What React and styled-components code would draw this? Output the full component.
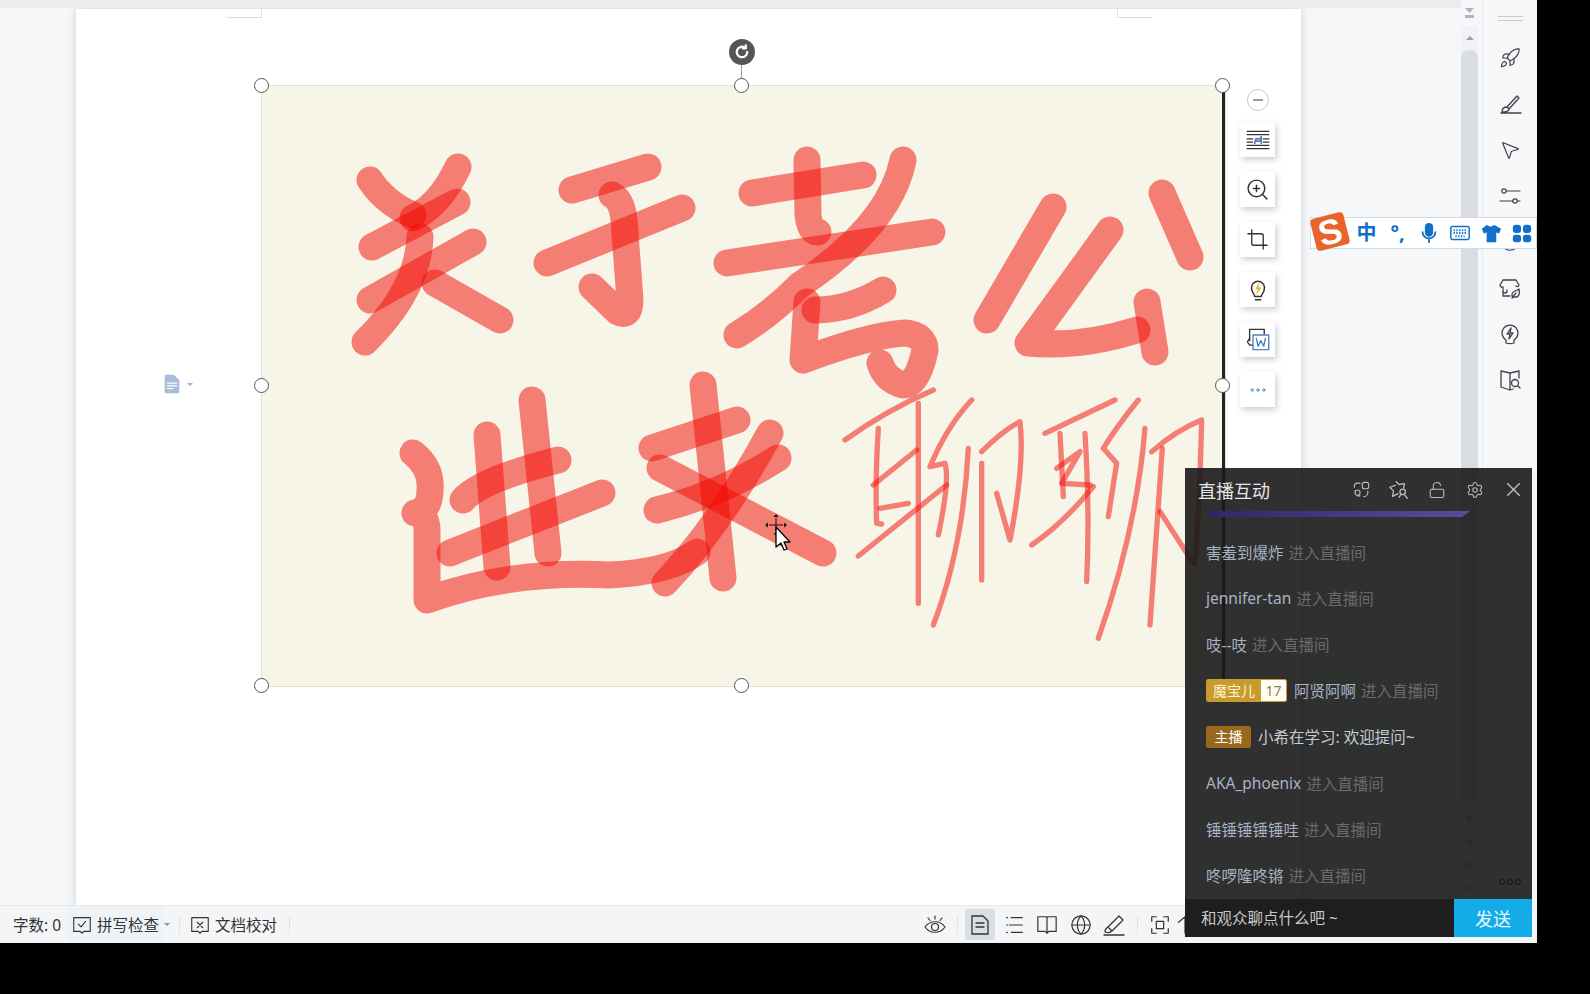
import React from "react";
import styled, { createGlobalStyle } from "styled-components";
import { Rocket, MousePointer2, Settings, X, LockOpen, Globe, ZoomIn, Crop } from "lucide-react";

const GlobalStyle = createGlobalStyle`
  html, body { margin: 0; padding: 0; background: #000; }
  body { font-family: "Noto Sans", "Noto Sans CJK SC", sans-serif; }
`;

const Root = styled.div`
  width: 1590px;
  height: 994px;
  background: #000;
  overflow: hidden;
`;

const Window = styled.div`
  position: relative;
  width: 1537px;
  height: 943px;
  display: flex;
  flex-direction: column;
  background: #f5f7f9;
  overflow: hidden;
`;

const Body = styled.div`
  flex: 1;
  min-height: 0;
  display: flex;
`;

const Canvas = styled.div`
  flex: 1;
  min-width: 0;
  border-top: 8px solid #eaecee;
  padding: 1px 0 0 76px;
  overflow: hidden;
  display: flex;
`;

const Page = styled.div`
  position: relative;
  width: 1225px;
  box-sizing: border-box;
  padding: 77px 0 0 186px;
  background: #fff;
  box-shadow: 0 0 8px rgba(120, 130, 140, 0.35);
`;

const CornerMark = styled.div`
  position: absolute;
  top: 0;
  left: ${(p) => p.$x}px;
  width: 34px;
  height: 8px;
  border-bottom: 1px solid #dcdcdc;
  ${(p) => (p.$flip ? "border-left" : "border-right")}: 1px solid #dcdcdc;
`;

const MarginTool = styled.div`
  position: absolute;
  left: 85px;
  top: 364px;
  display: flex;
  align-items: center;
  gap: 4px;
  color: #a8bbd8;
`;

const Caret = styled.span`
  width: 0;
  height: 0;
  border-left: 3px solid transparent;
  border-right: 3px solid transparent;
  border-top: 3px solid ${(p) => p.$color || "#8a9099"};
`;

const ImageFrame = styled.div`
  position: relative;
  width: 960px;
  height: 600px;
  background: #f7f5e8;
  outline: 1px solid #dfe3d2;
  border-right: 3px solid #222;
  box-sizing: content-box;
`;

const Ink = styled.svg`
  display: block;
  overflow: visible;
`;

const Handle = styled.div`
  position: absolute;
  left: ${(p) => p.$x}px;
  top: ${(p) => p.$y}px;
  width: 13px;
  height: 13px;
  margin: -8px 0 0 -8px;
  border: 1.5px solid #555;
  border-radius: 50%;
  background: #fff;
`;

const RotateLine = styled.div`
  position: absolute;
  left: 479px;
  top: -21px;
  width: 1px;
  height: 14px;
  background: #9a9a9a;
`;

const RotateHandle = styled.div`
  position: absolute;
  left: 467px;
  top: -47px;
  width: 26px;
  height: 26px;
  border-radius: 50%;
  background: #555;
  display: flex;
  align-items: center;
  justify-content: center;
`;

const FloatTools = styled.div`
  position: absolute;
  left: 978px;
  top: 3px;
  width: 35px;
  display: flex;
  flex-direction: column;
  align-items: center;
  gap: 15px;
`;

const MinusButton = styled.div`
  width: 20px;
  height: 20px;
  margin-bottom: -4px;
  border: 1.5px solid #c9c9c9;
  border-radius: 50%;
  background: #fff;
  display: flex;
  align-items: center;
  justify-content: center;

  &::before {
    content: "";
    width: 10px;
    height: 2.5px;
    background: #9b9b9b;
  }
`;

const ToolButton = styled.div`
  width: 35px;
  height: 35px;
  background: #fff;
  box-shadow: 2px 3px 6px rgba(90, 100, 110, 0.3);
  display: flex;
  align-items: center;
  justify-content: center;
  color: #333;
`;

const Scrollbar = styled.div`
  width: 17px;
  margin-right: 4px;
  background: #f0f2f5;
  display: flex;
  flex-direction: column;
  align-items: center;
`;

const ScrollHead = styled.div`
  width: 100%;
  height: 26px;
  background: #f5f7f9;
  display: flex;
  flex-direction: column;
  align-items: center;
  justify-content: center;
  gap: 2px;
`;

const ScrollTiny = styled.div`
  width: 9px;
  height: ${(p) => p.$h}px;
  background: #b0b5bb;
  clip-path: ${(p) => (p.$tri ? "polygon(0 0, 100% 0, 50% 100%)" : "none")};
`;

const ScrollUp = styled.div`
  height: 24px;
  display: flex;
  align-items: center;

  &::before {
    content: "";
    border-left: 4px solid transparent;
    border-right: 4px solid transparent;
    border-bottom: 4px solid #9aa0a7;
  }
`;

const ScrollThumb = styled.div`
  flex: 1;
  width: 100%;
  border-radius: 8px 8px 0 0;
  background: #d9dce1;
`;

const ScrollFoot = styled.div`
  height: 105px;
  width: 100%;
  box-sizing: border-box;
  padding-top: 16px;
  background: #f5f7f9;
  display: flex;
  flex-direction: column;
  align-items: center;
  gap: 17px;

  span {
    width: 7px;
    height: 6px;
    background: #555;
    opacity: 0.3;
  }
`;

const Sidebar = styled.div`
  width: 54px;
  border-left: 1px solid #e9ebee;
  display: flex;
  flex-direction: column;
  align-items: center;
  color: #3f4246;
`;

const DragLines = styled.div`
  width: 25px;
  height: 35px;
  box-sizing: border-box;
  padding-top: 16px;

  &::before,
  &::after {
    content: "";
    display: block;
    height: 1px;
    margin-bottom: 3px;
    background: #c6c9cd;
  }
`;

const SideItem = styled.div`
  width: 100%;
  height: 46px;
  display: flex;
  align-items: center;
  justify-content: center;
`;

const SideMore = styled.div`
  margin-top: auto;
  margin-bottom: 20px;
  display: flex;
  gap: 2px;

  span {
    width: 6px;
    height: 6px;
    box-sizing: border-box;
    border: 1.5px solid #000;
    border-radius: 50%;
  }
`;

const StatusBar = styled.div`
  height: 37px;
  flex: none;
  border-top: 1px solid #e6e8eb;
  background: #f3f5f7;
  display: flex;
  align-items: center;
  padding-left: 13px;
  color: #333;
  font-size: 15.5px;
`;

const WordCount = styled.span`
  width: 53px;
`;

const StatusAction = styled.div`
  height: 100%;
  padding: 0 ${(p) => (p.$hover ? 5 : 0)}px;
  background: ${(p) => (p.$hover ? "#eef3f8" : "transparent")};
  display: flex;
  align-items: center;
  gap: 4px;
`;

const StatusSep = styled.div`
  width: 1px;
  height: 18px;
  margin: 0 ${(p) => p.$m ?? 12}px;
  background: #dfe2e6;
`;

const StatusRight = styled.div`
  margin-left: auto;
  display: flex;
  align-items: center;
  padding-right: 337px;
`;

const ViewButton = styled.div`
  width: 30px;
  height: 31px;
  margin-left: ${(p) => p.$ml ?? 0}px;
  margin-right: ${(p) => p.$mr ?? 3.5}px;
  border-radius: 2px;
  background: ${(p) => (p.$active ? "#d9dee4" : "transparent")};
  display: flex;
  align-items: center;
  justify-content: center;
  color: #333;
`;

const ChatPanel = styled.div`
  position: absolute;
  left: 1185px;
  top: 468px;
  width: 347px;
  height: 469px;
  display: flex;
  flex-direction: column;
  background: rgba(26, 26, 26, 0.9);
`;

const ChatHeader = styled.div`
  height: 43px;
  flex: none;
  display: flex;
  align-items: center;
  padding-left: 13px;
  color: #b9bdc2;
`;

const ChatTitle = styled.div`
  margin-right: auto;
  color: #e6e6e6;
  font-size: 18px;
`;

const HeaderIcon = styled.div`
  width: 38px;
  display: flex;
  justify-content: center;
`;

const GiftBar = styled.div`
  height: 6px;
  flex: none;
  margin: 0 62px 0 23px;
  background: linear-gradient(90deg, #2b2868, #5c4c9c);
  clip-path: polygon(0 0, 100% 0, 97% 100%, 1% 100%);
`;

const ChatList = styled.div`
  flex: 1;
  padding: 12px 0 0 21px;
`;

const ChatRow = styled.div`
  height: 46.2px;
  display: flex;
  align-items: center;
  gap: 5px;
  font-size: 15.5px;
  white-space: nowrap;
`;

const UserName = styled.span`
  color: #a8b3c4;
`;

const EnterText = styled.span`
  color: #6a6a6a;
`;

const MessageText = styled.span`
  margin-left: 2px;
  color: #c4cad3;
`;

const FanBadge = styled.span`
  display: inline-flex;
  height: 21px;
  margin-right: 2px;
  border: 1px solid #c89b2e;
  border-radius: 2px;
  overflow: hidden;
  font-size: 14px;
  line-height: 21px;
`;

const FanName = styled.span`
  padding: 0 6px;
  background: #c89b2e;
  color: #fff2cf;
`;

const FanLevel = styled.span`
  width: 25px;
  text-align: center;
  background: #fffdf3;
  color: #8d8250;
`;

const HostBadge = styled.span`
  width: 45px;
  height: 22px;
  border-radius: 2px;
  background: #9a681d;
  color: #fff;
  font-size: 14px;
  line-height: 22px;
  text-align: center;
`;

const InputRow = styled.div`
  height: 38px;
  flex: none;
  display: flex;
  background: #1e1e1e;
`;

const Placeholder = styled.div`
  flex: 1;
  padding-left: 16px;
  color: #c8c8c8;
  font-size: 15.5px;
  line-height: 38px;
`;

const SendButton = styled.div`
  width: 78px;
  background: #14ace8;
  color: #e8f7ff;
  font-size: 18px;
  line-height: 40px;
  text-align: center;
`;

const ImeBar = styled.div`
  position: absolute;
  left: 1310px;
  top: 217px;
  width: 227px;
  height: 32px;
  box-sizing: border-box;
  padding-left: 40px;
  border: 1px solid #d3d9e4;
  background: #fff;
  display: flex;
  align-items: center;
  color: #1170c9;
`;

const ImeLogo = styled.div`
  position: absolute;
  left: 2px;
  top: -3px;
  width: 34px;
  height: 33px;
  border-radius: 4px;
  background: #e8642a;
  transform: rotate(-14deg);
  color: #fff;
  font-family: "Liberation Sans", sans-serif;
  font-size: 35px;
  font-weight: 700;
  line-height: 33px;
  text-align: center;
`;

const ImeItem = styled.div`
  width: 31px;
  flex: none;
  display: flex;
  justify-content: center;
  font-size: ${(p) => p.$size || 20}px;
  font-weight: 700;
  line-height: 1;
`;

const PointerWrap = styled.svg`
  position: absolute;
  left: 764px;
  top: 513px;
`;

const fatStrokes = [
  // guan
  "M370 180Q385 203 413 215",
  "M458 167Q440 205 413 218",
  "M372 247L457 202",
  "M370 300L473 242",
  "M420 237Q418 290 365 342",
  "M435 283L500 320",
  // yu
  "M572 190L648 167",
  "M547 263L682 208",
  "M612 195Q622 200 624 220L630 300Q630 318 618 312L592 287",
  // lao
  "M752 193L863 175",
  "M807 160L808 215Q810 232 818 232",
  "M727 263L932 232",
  "M903 160Q890 225 800 285Q770 315 737 335",
  "M815 310Q850 310 883 290",
  "M807 302L803 360Q870 335 905 333Q925 335 925 350Q918 385 903 385Q885 380 880 363",
  // gong
  "M1053 207L987 320",
  "M1110 230L1028 343Q1080 348 1137 330",
  "M1147 302L1155 352",
  "M1162 193L1190 257",
  // jin
  "M413 453Q432 468 430 490Q430 510 415 513Q427 515 427 530L427 600Q510 570 610 575Q670 572 697 552",
  "M487 435L497 567",
  "M532 400L548 553",
  "M463 500Q480 480 558 460",
  "M450 553L602 493",
  // lai
  "M652 448L737 420",
  "M703 385L723 578",
  "M657 510Q720 495 778 458",
  "M660 468L823 553",
  "M770 433Q720 525 665 583",
];

const thinStrokes = [
  "M45 180Q170 90 310 30",
  "M145 145Q135 300 140 430L155 432",
  "M265 70L265 670",
  "M130 315L260 210",
  "M150 385L235 370",
  "M85 528L350 315",
  "M425 60Q350 140 300 260L345 250Q360 300 325 465",
  "M415 205Q400 500 310 735",
  "M455 215Q520 150 570 125Q585 250 540 480L500 340",
  "M455 250L455 600",
  "M645 160Q750 110 855 60",
  "M690 160L700 350",
  "M680 265L750 215L695 310L780 315",
  "M765 160Q780 400 770 605",
  "M605 495Q700 430 790 320",
  "M925 60Q860 140 820 205L860 250L835 410",
  "M945 145Q920 450 805 775",
  "M965 215Q1040 150 1115 120Q1110 350 1095 550",
  "M997 205L960 735",
  "M990 395L1090 550",
];

const handles = [
  [0, 0], [480, 0], [961, 0],
  [0, 300], [961, 300],
  [0, 600], [480, 600],
];

const chatRows = [
  { name: "害羞到爆炸" },
  { name: "jennifer-tan" },
  { name: "吱--吱" },
  { name: "阿贤阿啊", fan: true },
  { host: true },
  { name: "AKA_phoenix" },
  { name: "锤锤锤锤锤哇" },
  { name: "咚啰隆咚锵" },
];

function Svg({ size = 22, children, ...rest }) {
  return (
    <svg width={size} height={size} viewBox="0 0 24 24" fill="none" stroke="currentColor" strokeWidth="1.5" strokeLinecap="round" strokeLinejoin="round" {...rest}>
      {children}
    </svg>
  );
}

function App() {
  return (
    <Root>
      <GlobalStyle />
      <Window>
        <Body>
          <Canvas>
            <Page>
              <CornerMark $x={151} />
              <CornerMark $x={1041} $flip />
              <MarginTool>
                <Svg size={22}>
                  <path d="M4 2h10l6 6v14H4z" fill="#a8bbd8" stroke="none" />
                  <path d="M7 11h10M7 14h10M7 17h6" stroke="#fff" />
                </Svg>
                <Caret $color="#a8b0bc" />
              </MarginTool>
              <ImageFrame>
                <Ink width="960" height="600" viewBox="262 86 960 600">
                  <g fill="none" stroke="#f20800" strokeOpacity="0.5" strokeWidth="27" strokeLinecap="round" strokeLinejoin="round">
                    {fatStrokes.map((d) => <path key={d} d={d} />)}
                  </g>
                  <g transform="translate(830 380) scale(0.3333)" fill="none" stroke="#f20800" strokeOpacity="0.5" strokeWidth="16" strokeLinecap="round" strokeLinejoin="round">
                    {thinStrokes.map((d) => <path key={d} d={d} />)}
                  </g>
                </Ink>
                <RotateLine />
                <RotateHandle>
                  <Svg size={18} stroke="#fff" strokeWidth="3">
                    <path d="M19 12a7 7 0 1 1-2.5-5.4" />
                    <path d="M17 3v4h-4" />
                  </Svg>
                </RotateHandle>
                {handles.map(([x, y]) => <Handle key={`${x}-${y}`} $x={x} $y={y} />)}
                <FloatTools>
                  <MinusButton />
                  <ToolButton>
                    <Svg size={26} strokeWidth="1.2">
                      <path d="M2 4h20M2 7h20M2 20h20M2 17h20M2 11h5M2 14h5M17 11h5M17 14h5" />
                      <path d="M9 15l1-4h4l1-2v6M11 13h3" stroke="#5c7cc0" strokeWidth="1.6" />
                    </Svg>
                  </ToolButton>
                  <ToolButton>
                    <ZoomIn size={25} strokeWidth={1.4} />
                  </ToolButton>
                  <ToolButton>
                    <Crop size={23} strokeWidth={1.4} />
                  </ToolButton>
                  <ToolButton>
                    <Svg size={26} strokeWidth="1.4">
                      <path d="M9 18c0-2-3-3.5-3-8a6 6 0 0 1 12 0c0 4.5-3 6-3 8z" />
                      <path d="M9.5 21h5" />
                      <path d="M13 6l-3 5h2.5L11 15l3.5-5H12z" fill="#f0b429" stroke="#f0b429" strokeWidth="0.8" />
                    </Svg>
                  </ToolButton>
                  <ToolButton>
                    <Svg size={27} strokeWidth="1.2">
                      <path d="M5 13V3h13v4" />
                      <path d="M5 11l-2 3 2 3h3" />
                      <path d="M8 8h14v13H8z" stroke="#4f80c4" />
                      <path d="M11 11l1.5 7 2.5-5 2.5 5 1.5-7" stroke="#4f80c4" />
                    </Svg>
                  </ToolButton>
                  <ToolButton>
                    <Svg size={20} strokeWidth="1.2" stroke="#5b8fb8">
                      <circle cx="5" cy="12" r="1.5" />
                      <circle cx="12" cy="12" r="1.5" />
                      <circle cx="19" cy="12" r="1.5" />
                    </Svg>
                  </ToolButton>
                </FloatTools>
              </ImageFrame>
            </Page>
          </Canvas>
          <Scrollbar>
            <ScrollHead>
              <ScrollTiny $h={5} $tri />
              <ScrollTiny $h={3} />
            </ScrollHead>
            <ScrollUp />
            <ScrollThumb />
            <ScrollFoot><span /><span /><span /><span /></ScrollFoot>
          </Scrollbar>
          <Sidebar>
            <DragLines />
            <SideItem><Rocket size={22} strokeWidth={1.3} /></SideItem>
            <SideItem>
              <Svg size={24} strokeWidth="1.3">
                <path d="M3 21h20M4 20c0-3 2-5 5-5l2 2c0 2-2 3-7 3zM9 15L19 4l2 2-10 11" />
              </Svg>
            </SideItem>
            <SideItem><MousePointer2 size={22} strokeWidth={1.3} /></SideItem>
            <SideItem>
              <Svg size={24} strokeWidth="1.2">
                <circle cx="6" cy="7" r="2.2" />
                <path d="M8.5 7H22M2 17h13" />
                <circle cx="17" cy="17" r="2.2" />
                <path d="M19.5 17H22" />
              </Svg>
            </SideItem>
            <SideItem>
              <Svg size={22} strokeWidth="1.3"><circle cx="12" cy="12" r="9" /></Svg>
            </SideItem>
            <SideItem>
              <Svg size={24} strokeWidth="1.3">
                <path d="M5 4h13l3 5c0 1.5-2 2-3 1M5 4L2 9c0 2 2 2.5 3 2v9h7M5 14v1a2 2 0 0 0 4 0v-1" />
                <path d="M15 21c-2-2-1-5 2-6 3-1 4-2 4-2 1 4 0 8-3 8zM14 22l4-5" />
              </Svg>
            </SideItem>
            <SideItem>
              <Svg size={24} strokeWidth="1.3">
                <path d="M8 20v-3a8 8 0 1 1 8 0v3c-3 1-5 1-8 0z" transform="translate(0 1)" />
                <path d="M13 6l-4 6h3l-1 5 4-6h-3z" />
              </Svg>
            </SideItem>
            <SideItem>
              <Svg size={24} strokeWidth="1.3">
                <path d="M12 5L3 3v16l9 3V5l9-2v7M12 22l3-1" />
                <circle cx="17" cy="15" r="3.5" />
                <path d="M20 18l2 2" />
              </Svg>
            </SideItem>
            <SideMore><span /><span /><span /></SideMore>
          </Sidebar>
        </Body>
        <StatusBar>
          <WordCount>字数: 0</WordCount>
          <StatusAction $hover>
            <Svg size={22} strokeWidth="1.2">
              <path d="M3 4h18v15h-7l-2 2-2-2H3z" />
              <path d="M8 11l3 3 5-6" />
            </Svg>
            拼写检查
          </StatusAction>
          <Caret />
          <StatusSep $m={9} />
          <StatusAction>
            <Svg size={22} strokeWidth="1.2">
              <path d="M3 4h18v15h-7l-2 2-2-2H3z" />
              <path d="M9 9l6 6M15 9l-6 6" />
            </Svg>
            文档校对
          </StatusAction>
          <StatusSep />
          <StatusRight>
            <ViewButton $mr={7}>
              <Svg size={24} strokeWidth="1.2">
                <path d="M2 14c5-7 15-7 20 0-5 7-15 7-20 0z" />
                <circle cx="12" cy="14" r="3.5" />
                <path d="M12 3v3M5 5l2 2.5M19 5l-2 2.5" />
              </Svg>
            </ViewButton>
            <StatusSep $m={0} />
            <ViewButton $active $ml={7} $mr={4}>
              <Svg size={24} strokeWidth="1.3">
                <path d="M4 3h11l5 5v13H4zM8 10h8M8 14h8" />
              </Svg>
            </ViewButton>
            <ViewButton>
              <Svg size={22} strokeWidth="1.3">
                <path d="M4 4h1M9 4h12M7 12h14M4 12h1M9 20h12M4 20h1" />
              </Svg>
            </ViewButton>
            <ViewButton>
              <Svg size={22} strokeWidth="1.3">
                <path d="M2 3h9l1 1 1-1h9v16h-8l-2 2-2-2H2zM12 4v15" />
              </Svg>
            </ViewButton>
            <ViewButton><Globe size={22} strokeWidth={1.3} /></ViewButton>
            <ViewButton $mr={8}>
              <Svg size={24} strokeWidth="1.3">
                <path d="M2 22h20M3 19c0-2 1-4 3-5L17 3l4 4L10 18c-1 1-4 2-7 1zM6 14l4 4" />
              </Svg>
            </ViewButton>
            <StatusSep $m={0} />
            <ViewButton $ml={7} $mr={-5}>
              <Svg size={22} strokeWidth="1.3">
                <path d="M3 8V3h5M16 3h5v5M21 16v5h-5M8 21H3v-5" />
                <rect x="8" y="8" width="8" height="8" />
              </Svg>
            </ViewButton>
            <ViewButton $mr={0}>
              <Svg size={22} strokeWidth="1.3">
                <path d="M12 3v18M5 9l7-6 7 6" />
              </Svg>
            </ViewButton>
          </StatusRight>
        </StatusBar>

        <ImeBar>
          <ImeLogo>S</ImeLogo>
          <ImeItem>中</ImeItem>
          <ImeItem $size={20}>°,</ImeItem>
          <ImeItem>
            <Svg size={22} strokeWidth="2">
              <rect x="8.5" y="2" width="7" height="13" rx="3.5" fill="currentColor" />
              <path d="M5 11a7 7 0 0 0 14 0M12 18v4" />
            </Svg>
          </ImeItem>
          <ImeItem>
            <Svg size={22} strokeWidth="1.6">
              <rect x="2" y="5" width="20" height="14" rx="1.5" />
              <path d="M5 9h14M5 12h14M7 15.5h10" strokeDasharray="1.5 1.5" strokeWidth="2" strokeLinecap="butt" />
            </Svg>
          </ImeItem>
          <ImeItem>
            <Svg size={23} stroke="none">
              <path d="M8 3l4 2 4-2 7 4-2 5-3-1v10H8V11l-3 1-2-5z" fill="currentColor" />
            </Svg>
          </ImeItem>
          <ImeItem>
            <Svg size={22} stroke="none" fill="currentColor">
              <rect x="2" y="3" width="9" height="9" rx="3.5" />
              <rect x="13" y="3" width="9" height="9" rx="3.5" />
              <rect x="2" y="14" width="9" height="8" rx="3" />
              <rect x="13" y="14" width="9" height="8" rx="3" />
            </Svg>
          </ImeItem>
        </ImeBar>

        <ChatPanel>
          <ChatHeader>
            <ChatTitle>直播互动</ChatTitle>
            <HeaderIcon>
              <Svg size={19} strokeWidth="1.4">
                <path d="M10 4H7a4 4 0 0 0-4 4v1M4 14v1M10 20H7" />
                <rect x="13" y="3" width="8" height="8" rx="2.5" />
                <rect x="4" y="13" width="6" height="6" rx="1.5" />
                <path d="M20 14v2a5 5 0 0 1-5 5" />
              </Svg>
            </HeaderIcon>
            <HeaderIcon>
              <Svg size={22} strokeWidth="1.4">
                <path d="M9 3l3 3 6-1-1 5M5 19l1-6-4-4 6-2" />
                <path d="M5 19l6-3" />
                <circle cx="16" cy="14" r="3" />
                <path d="M14 17l-2 3M18 17l3 4" />
              </Svg>
            </HeaderIcon>
            <HeaderIcon><LockOpen size={18} strokeWidth={1.4} /></HeaderIcon>
            <HeaderIcon><Settings size={18} strokeWidth={1.4} /></HeaderIcon>
            <HeaderIcon><X size={23} strokeWidth={1.5} /></HeaderIcon>
          </ChatHeader>
          <GiftBar />
          <ChatList>
            {chatRows.map((row) => row.host ? (
              <ChatRow key="host">
                <HostBadge>主播</HostBadge>
                <MessageText>小希在学习: 欢迎提问~</MessageText>
              </ChatRow>
            ) : (
              <ChatRow key={row.name}>
                {row.fan && (
                  <FanBadge>
                    <FanName>魔宝儿</FanName>
                    <FanLevel>17</FanLevel>
                  </FanBadge>
                )}
                <UserName>{row.name}</UserName>
                <EnterText>进入直播间</EnterText>
              </ChatRow>
            ))}
          </ChatList>
          <InputRow>
            <Placeholder>和观众聊点什么吧 ~</Placeholder>
            <SendButton>发送</SendButton>
          </InputRow>
        </ChatPanel>

        <PointerWrap width="30" height="40" viewBox="0 0 30 40">
          <path d="M12 5v14M5 12h14" stroke="#111" strokeWidth="1" />
          <path d="M12 1l-2.5 3h5zM12 23l-2.5-3h5zM1 12l3-2.5v5zM23 12l-3-2.5v5z" fill="#111" />
          <path d="M12 14v20l5-4 3 7 3-1-3-7h6z" fill="#fff" stroke="#000" strokeWidth="1.3" strokeLinejoin="round" />
        </PointerWrap>
      </Window>
    </Root>
  );
}

export default App;
